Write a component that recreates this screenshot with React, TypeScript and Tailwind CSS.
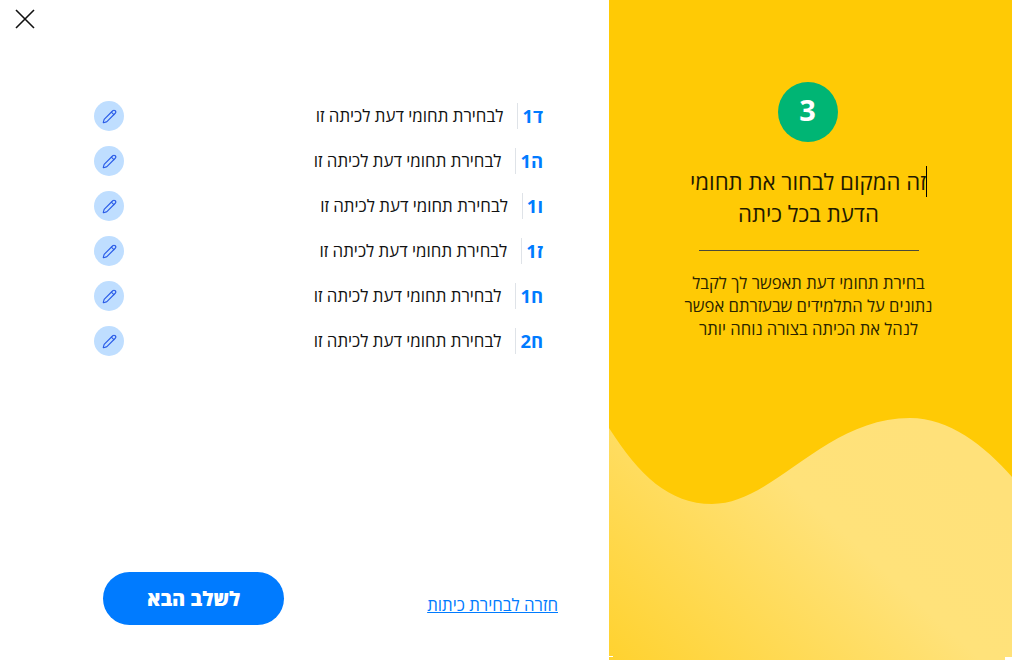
import { Pencil } from "lucide-react";

const rows = ["ד1", "ה1", "ו1", "ז1", "ח1", "ח2"];

function Row({ label }: { label: string }) {
  return (
    <div className="flex h-[30px] w-[449px] items-center justify-between">
      <div className="flex items-center">
        <span className="border-l border-[#dfe3e8] pl-[4px] text-[18.4px] leading-[26px] font-bold text-[#007bff]">
          {label}
        </span>
        <span className="pr-[14px] text-[16.85px] leading-[26px] text-[#111]">לבחירת תחומי דעת לכיתה זו</span>
      </div>
      <button className="flex size-[30px] items-center justify-center rounded-full bg-[#bfdeff]">
        <Pencil size={15} strokeWidth={1.8} color="#2a5ce8" />
      </button>
    </div>
  );
}

export default function App() {
  return (
    <div dir="rtl" className="flex h-[660px] w-[1012px] overflow-hidden bg-white font-['Open_Sans','Noto_Sans',sans-serif]">
      <aside className="relative flex h-full w-[403px] flex-col items-center overflow-hidden bg-[#ffca05] pr-[4px]">
        <div className="mt-[82px] mr-[2px] flex size-[60px] items-center justify-center rounded-full bg-[#00b574] pb-[5px] text-[29px] leading-none font-bold text-white">
          3
        </div>
        <h1 className="mt-[24px] w-[300px] text-center text-[22.2px] leading-[32px] font-normal text-[#1f1a00]">
          <span className="border-r border-black">זה המקום לבחור את תחומי</span>
          <br />
          הדעת בכל כיתה
        </h1>
        <div className="mt-[20px] h-px w-[220px] bg-[#4a4a3a]" />
        <p className="mt-[20px] w-[270px] text-center text-[16.6px] leading-[23px] text-[#2a2400]">
          בחירת תחומי דעת תאפשר לך לקבל נתונים על התלמידים שבעזרתם אפשר לנהל את הכיתה בצורה נוחה יותר
        </p>
        <svg className="absolute bottom-0 left-0" width="403" height="260" viewBox="0 0 403 260">
          <defs>
            <linearGradient id="wave" x1="0" y1="1" x2="1" y2="0.35">
              <stop offset="0" stopColor="#ffd22f" />
              <stop offset="0.65" stopColor="#ffe27a" />
              <stop offset="1" stopColor="#ffe17a" />
            </linearGradient>
          </defs>
          <path
            d="M0 28C30 75 60 104 103 104C165 104 215 18 301 18C340 18 375 45 403 77V260H0Z"
            fill="url(#wave)"
          />
          <rect x="0" y="256" width="4" height="1" fill="#fff" />
          <rect x="396" y="257" width="7" height="3" fill="#fff" />
        </svg>
      </aside>
      <main className="flex h-full w-[609px] flex-col">
        <div className="flex h-[101px] justify-end pt-[9px] pl-[15px]">
          <svg width="20" height="20" viewBox="0 0 20 20" stroke="#111" strokeWidth="1.6" fill="none">
            <path d="M1 1L19 19M19 1L1 19" />
          </svg>
        </div>
        <div className="flex flex-col gap-[15px] pr-[66px]">
          {rows.map((r) => (
            <Row key={r} label={r} />
          ))}
        </div>
        <div className="mt-auto flex items-start justify-between pr-[51px] pb-[35px] pl-[103px]">
          <a className="mt-[23px] text-[16.8px] leading-[20px] text-[#007bff] underline">חזרה לבחירת כיתות</a>
          <button className="flex h-[53px] w-[181px] items-center justify-center rounded-full bg-[#007bff] text-[20px] font-extrabold text-white">
            לשלב הבא
          </button>
        </div>
      </main>
    </div>
  );
}
